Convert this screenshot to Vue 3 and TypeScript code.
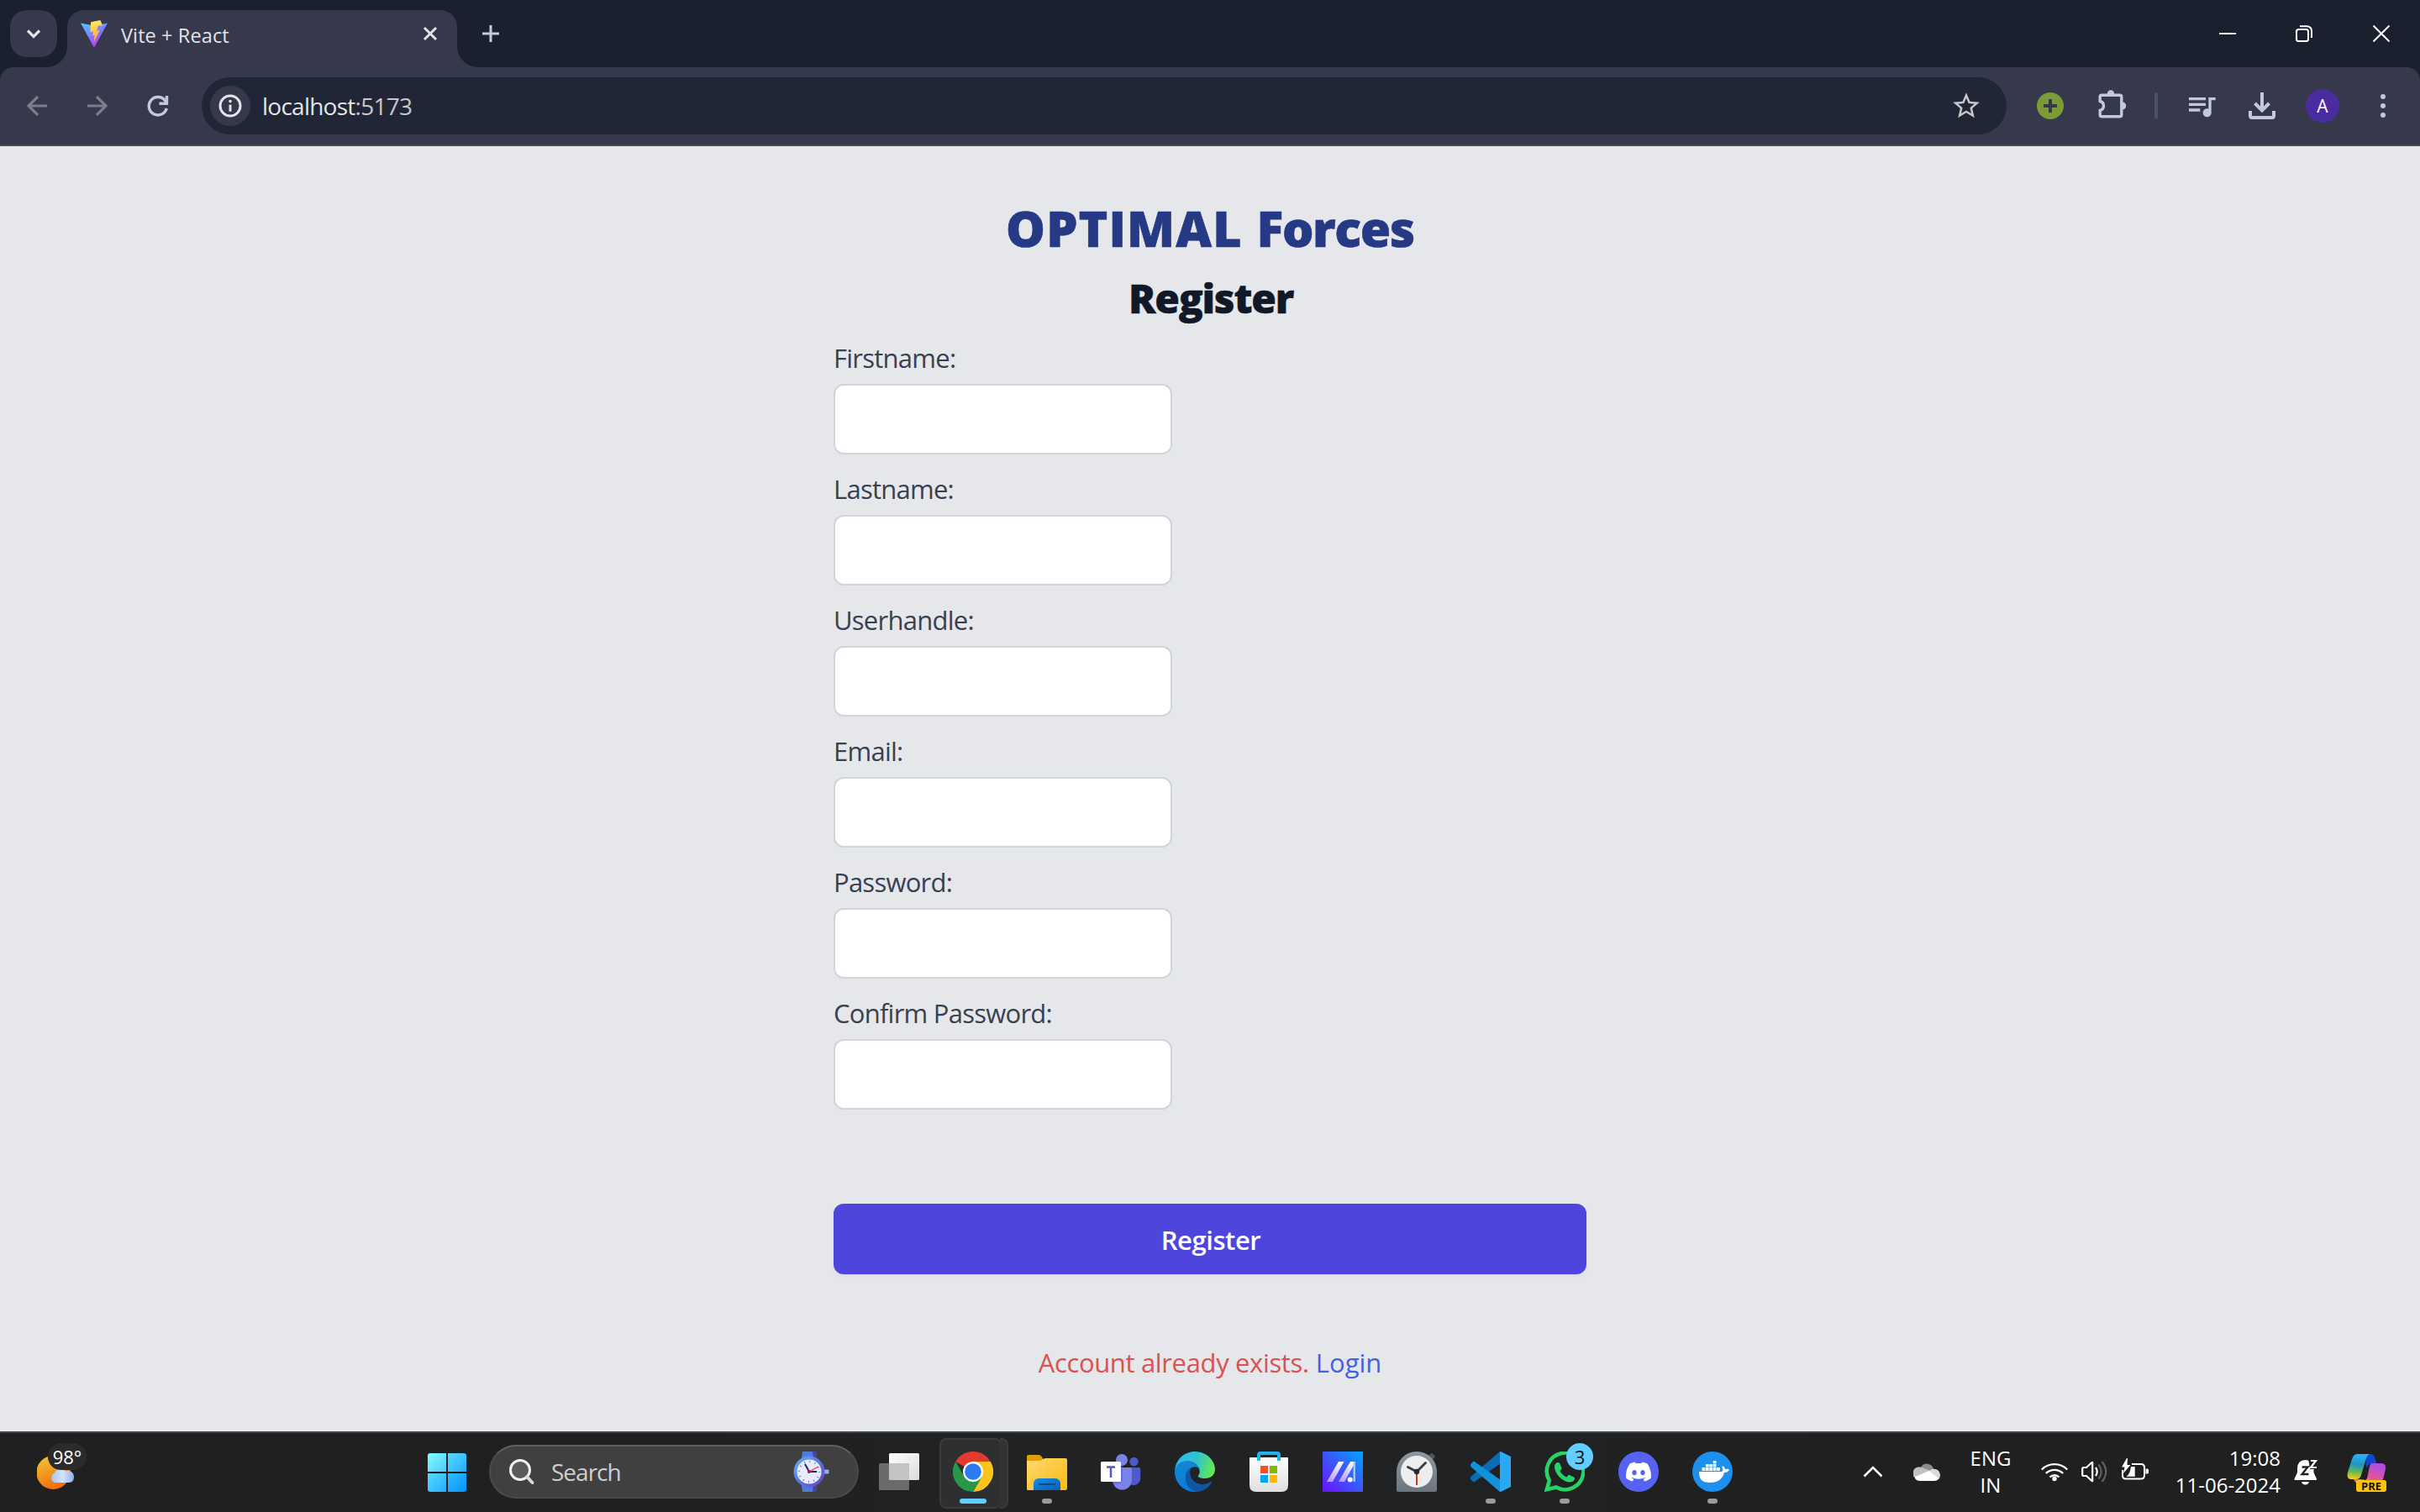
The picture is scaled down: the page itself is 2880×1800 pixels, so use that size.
<script setup lang="ts">
const fields: string[] = ['Firstname:', 'Lastname:', 'Userhandle:', 'Email:', 'Password:', 'Confirm Password:']
</script>

<template>
  <div class="screen">
    <header class="tabstrip">
      <button class="tab-search" aria-label="Search tabs">
        <svg width="24" height="24" viewBox="0 0 24 24"><path d="M5 8.5l7 7 7-7" fill="none" stroke="#e3e3e8" stroke-width="3.2" /></svg>
      </button>
      <div class="tab">
        <svg class="favicon" width="32" height="32" viewBox="0 0 32 32">
          <defs>
            <linearGradient id="vite-a" x1="0" y1="0" x2=".6" y2="1"><stop offset="0" stop-color="#41d1ff" /><stop offset="1" stop-color="#bd34fe" /></linearGradient>
            <linearGradient id="vite-b" x1=".4" y1="0" x2=".6" y2="1"><stop offset="0" stop-color="#ffea60" /><stop offset="1" stop-color="#ffa020" /></linearGradient>
          </defs>
          <path d="M0 3.6l16 2.8L32 3.6 16.7 31.4q-.7 1-1.4 0z" fill="url(#vite-a)" />
          <path d="M23.4 0L12.2 2.3l-.8 11.9 3.6-.7-.9 5.1 2.5-.7-1.2 9.4 7.2-15.4-3.7.8 2-6.1h5.3z" fill="url(#vite-b)" />
        </svg>
        <span class="tab-title">Vite + React</span>
        <svg width="20" height="20" viewBox="0 0 20 20"><path d="M3 3l14 14M17 3L3 17" stroke="#e3e3e8" stroke-width="3" /></svg>
      </div>
      <svg class="new-tab" width="20" height="20" viewBox="0 0 20 20"><path d="M10 0v20M0 10h20" stroke="#c3c8dc" stroke-width="3" /></svg>
      <div class="window-controls">
        <span><svg width="20" height="20" viewBox="0 0 20 20"><path d="M0 10h20" stroke="#fff" stroke-width="2" /></svg></span>
        <span><svg width="20" height="20" viewBox="0 0 20 20" fill="none" stroke="#fff" stroke-width="2"><rect x="1" y="5" width="14" height="14" rx="2.5" /><path d="M5 1.2h8.5a5.5 5.5 0 0 1 5.5 5.5V15" /></svg></span>
        <span><svg width="20" height="20" viewBox="0 0 20 20"><path d="M.5.5l19 19M19.5.5l-19 19" stroke="#fff" stroke-width="2" /></svg></span>
      </div>
    </header>

    <div class="toolbar-back">
      <nav class="toolbar">
        <span class="slot"><svg width="24" height="24" viewBox="0 0 24 24" fill="none" stroke="#7c7f8b" stroke-width="3.2"><path d="M24 12H2.500M13 1L2 12l11 11" /></svg></span>
        <span class="slot"><svg width="24" height="24" viewBox="0 0 24 24" fill="none" stroke="#7c7f8b" stroke-width="3.2"><path d="M0 12h21.500M11 1l11 11-11 11" /></svg></span>
        <span class="slot"><svg width="28" height="28" viewBox="0 0 28 28" fill="none" stroke="#c3c8dc" stroke-width="3.4"><path d="M24.300 17A10.700 10.700 0 1 1 22.500 7.800L24 10" /><path d="M24.500 2v9.300H15.500" /></svg></span>
        <div class="omnibox">
          <span class="site-info"><svg width="28" height="28" viewBox="0 0 28 28"><circle cx="14" cy="14" r="12" fill="none" stroke="#e3e3e8" stroke-width="3" /><path d="M14 12.700v8" stroke="#e3e3e8" stroke-width="3" /><circle cx="14" cy="8.600" r="1.800" fill="#e3e3e8" /></svg></span>
          <span class="url">localhost<span class="port">:5173</span></span>
          <svg class="star" width="38" height="38" viewBox="0 0 24 24"><path fill="#c7c7cc" d="M22 9.240l-7.190-.62L12 2 9.190 8.630 2 9.240l5.460 4.730L5.820 21 12 17.270 18.180 21l-1.630-7.030L22 9.240zM12 15.400l-3.760 2.270 1-4.280-3.320-2.880 4.380-.38L12 6.100l1.710 4.040 4.380.38-3.320 2.880 1 4.280L12 15.400z" /></svg>
        </div>
        <span class="slot first"><svg width="32" height="32" viewBox="0 0 32 32"><circle cx="16" cy="16" r="16" fill="#7c9a38" /><path d="M16 8v16M8 16h16" stroke="#35394b" stroke-width="4" /></svg></span>
        <span class="slot"><svg width="48" height="48" viewBox="0 0 48 48"><path d="M13.200 11.200H34.800a2 2 0 0 1 2 2V34.800a2 2 0 0 1-2 2H13.200a2 2 0 0 1-2-2V29.500Q15.500 28.200 15.500 24T11.200 18.500V13.200a2 2 0 0 1 2-2z" fill="none" stroke="#c3c8dc" stroke-width="3.4" /><path d="M19.800 10a4.200 4.800 0 0 1 8.400 0zM38 19.500a4.200 4.500 0 0 1 0 9z" fill="#c3c8dc" /></svg></span>
        <span class="divider"><i></i></span>
        <span class="slot"><svg width="40" height="40" viewBox="0 0 24 24"><path fill="#c3c8dc" d="M15 6H3v2h12V6zm0 4H3v2h12v-2zM3 16h8v-2H3v2zM17 6v8.180c-.31-.11-.65-.18-1-.18-1.660 0-3 1.340-3 3s1.340 3 3 3 3-1.340 3-3V8h3V6h-5z" /></svg></span>
        <span class="slot"><svg width="32" height="32" viewBox="0 0 32 32" fill="none" stroke="#c3c8dc" stroke-width="4"><path d="M16 0v21M7.500 13l8.500 8.500L24.500 13" /><path d="M2 22v6a2 2 0 0 0 2 2h24a2 2 0 0 0 2-2v-6" /></svg></span>
        <span class="slot"><span class="avatar">A</span></span>
        <span class="slot"><svg width="8" height="28" viewBox="0 0 8 28" fill="#c3c8dc"><circle cx="4" cy="3" r="3" /><circle cx="4" cy="14" r="3" /><circle cx="4" cy="25" r="3" /></svg></span>
      </nav>
    </div>

    <main class="page">
      <form class="register" @submit.prevent>
        <h1><span class="optimal">OPTIMAL</span> <span class="forces">Forces</span></h1>
        <h2>Register</h2>
        <div v-for="field in fields" :key="field" class="field">
          <label>{{ field }}</label>
          <input type="text" />
        </div>
        <button class="submit" type="submit">Register</button>
        <p class="notice"><span class="message">Account already exists.</span> <a>Login</a></p>
      </form>
    </main>

    <footer class="taskbar">
      <div class="weather">
        <svg width="46" height="40" viewBox="0 0 46 40">
          <defs>
            <linearGradient id="moon" x1=".2" y1="0" x2=".6" y2="1"><stop offset="0" stop-color="#f2c233" /><stop offset="1" stop-color="#f26a0c" /></linearGradient>
            <linearGradient id="mist" x1="0" y1="0" x2="1" y2="0"><stop offset="0" stop-color="#a9c4f2" /><stop offset=".5" stop-color="#d7e3f8" /><stop offset="1" stop-color="#8fb0ec" /></linearGradient>
          </defs>
          <path d="M13 1A20 20 0 1 0 36 31C38 27 40 22 39.500 17L30 17Q15 17 13 1z" fill="url(#moon)" />
          <path d="M22 32a6 6 0 0 1-1-11.500Q22 16 28 16q5 0 6 2.500 3-1.500 6 0 4 2 4 7 0 6.500-6 6.500z" fill="url(#mist)" />
        </svg>
        <span class="temp">98°</span>
      </div>
      <div class="start"><i class="a"></i><i class="b"></i><i class="b"></i><i class="c"></i></div>
      <div class="search">
        <svg width="32" height="32" viewBox="0 0 32 32" fill="none"><circle cx="14" cy="14" r="11.500" fill="#5a5a5a" stroke="#f2f2f2" stroke-width="3" /><path d="M22 22l6.500 7" stroke="#d5dbe2" stroke-width="4" stroke-linecap="round" /></svg>
        <span class="search-text">Search</span>
        <svg class="watch" width="44" height="50" viewBox="0 0 44 50">
          <defs><linearGradient id="watch" x1="0" y1="0" x2="1" y2="1"><stop offset="0" stop-color="#5fb4f0" /><stop offset=".5" stop-color="#5a79dd" /><stop offset="1" stop-color="#6a3fb8" /></linearGradient></defs>
          <path d="M11 1h16l1 8H10zM10 41h18l-1 8H11z" fill="#5078dd" /><path d="M23 1h4l1 8h-4zM24 41h4l-1 8h-4z" fill="#4a41a8" />
          <rect x="36" y="22.500" width="6.500" height="5" rx="1" fill="#8fb0ec" />
          <circle cx="19" cy="25" r="18.500" fill="url(#watch)" /><circle cx="19" cy="25" r="14.500" fill="#e7ecfc" />
          <circle cx="19" cy="25" r="12" fill="none" stroke="#7c78c8" stroke-width="2.500" stroke-dasharray="1 5.283" />
          <path d="M19 25l-5-9M19 25h9" stroke="#2b1e6e" stroke-width="2" /><path d="M17 26l13-7" stroke="#f0605c" stroke-width="1.500" /><circle cx="19" cy="25" r="2" fill="#a02050" />
        </svg>
      </div>

      <div class="apps">
        <span class="app">
          <svg width="48" height="48" viewBox="0 0 48 48"><defs><linearGradient id="tv" x1="0" y1="0" x2="1" y2="1"><stop offset="0" stop-color="#fff" /><stop offset="1" stop-color="#dcdcdc" /></linearGradient></defs><rect x="12" y="2" width="36" height="32" rx="1.500" fill="url(#tv)" /><rect x="0" y="14" width="36" height="32" rx="1.500" fill="#6b6b6b" /><path d="M12 14h22.500a1.500 1.500 0 0 1 1.500 1.500V34H13.500a1.500 1.500 0 0 1-1.500-1.500z" fill="#c3c3c3" /></svg>
        </span>
        <span class="app active">
          <svg width="48" height="48" viewBox="0 0 48 48">
            <path d="M24 24L3.200 12A24 24 0 0 1 44.800 12z" fill="#e33b2e" />
            <path d="M24 12H44.800A24 24 0 0 1 24 48L34.400 30z" fill="#fcc31e" />
            <path d="M3.200 12L13.600 30 24 36 34.400 30 24 48A24 24 0 0 1 3.200 12z" fill="#279847" />
            <circle cx="24" cy="24" r="12" fill="#fff" /><circle cx="24" cy="24" r="9.800" fill="#2b7bf0" />
          </svg>
          <i class="mark wide"></i>
        </span>
        <span class="app">
          <svg width="48" height="48" viewBox="0 0 48 48">
            <defs><linearGradient id="fold" x1="0" y1="0" x2="1" y2="1"><stop offset="0" stop-color="#ffd970" /><stop offset="1" stop-color="#f9b90f" /></linearGradient><linearGradient id="foldb" x1="0" y1="0" x2="1" y2="1"><stop offset="0" stop-color="#1490e0" /><stop offset="1" stop-color="#0a5eb5" /></linearGradient></defs>
            <path d="M0 6q0-2 2-2h12q3 0 4.500 3.500L21 12H0z" fill="#dfa005" /><path d="M0 11h15q2 0 3.500-1.500T22 8h24q2 0 2 2v34q0 2-2 2H1.500Q0 46 0 44.500z" fill="url(#fold)" />
            <path d="M8 46v-8a6 6 0 0 1 6-6h20a6 6 0 0 1 6 6v8z" fill="url(#foldb)" /><path d="M15 39h18" stroke="#0b4a8c" stroke-width="2" stroke-linecap="round" />
          </svg>
          <i class="mark"></i>
        </span>
        <span class="app">
          <svg width="48" height="48" viewBox="0 0 48 48">
            <circle cx="39.500" cy="12" r="5.200" fill="#5059c9" /><path d="M33 19h12.500q1.700 0 1.700 2v10a8.500 8.500 0 0 1-14 7z" fill="#5059c9" />
            <circle cx="25" cy="10" r="7" fill="#7b83eb" /><path d="M14 19h21q2 0 2 2v13a11.500 11.500 0 0 1-23 0z" fill="#7b83eb" />
            <path d="M24 17v19H14.500l.5 3Q26 38 26 34V17z" fill="#5059c9" opacity=".5" />
            <rect y="12" width="24" height="24" rx="1.500" fill="#fff" /><path d="M7 18.500h10M12 18.500V31" stroke="#5059c9" stroke-width="2.500" />
          </svg>
        </span>
        <span class="app">
          <svg width="48" height="48" viewBox="0 0 48 48">
            <defs>
              <linearGradient id="edge-a" x1="0" y1=".3" x2="1" y2=".5"><stop offset="0" stop-color="#2fb7f0" /><stop offset=".5" stop-color="#2cc3d4" /><stop offset="1" stop-color="#66e84e" /></linearGradient>
              <linearGradient id="edge-b" x1="0" y1="0" x2=".4" y2="1"><stop offset="0" stop-color="#1488cf" /><stop offset="1" stop-color="#0a7be0" /></linearGradient>
            </defs>
            <path d="M0 23C1 9 12 0 24 0c14 0 24 11 24 21 0 7-5 11-12 11-5 0-9-1.500-8-3.500 4-4 1-11-5-13C14 11 3 13 0 23z" fill="url(#edge-a)" />
            <path d="M0 24C1 14 9 11 15 11c8 0 14 5 15 11-2-4-7-5-11-2C9 26 13 42 26 48 12 49 0 38 0 24z" fill="url(#edge-b)" />
            <path d="M19 20c-3 10 4 19 14 19 4 0 8-2 10.500-3.300.6-.2 1 .2.700.8C40 44 33 48 26 48 17 46 12 38 13 30c.5-5 3-8.500 6-10z" fill="#0f57a4" />
          </svg>
        </span>
        <span class="app">
          <svg width="48" height="48" viewBox="0 0 48 48">
            <defs><linearGradient id="bag" x1="0" y1="0" x2="0" y2="1"><stop offset="0" stop-color="#fff" /><stop offset="1" stop-color="#dedede" /></linearGradient></defs>
            <path d="M1 8q0-1 1-1h44q1 0 1 1v32q0 8-8 8H9q-8 0-8-8z" fill="url(#bag)" />
            <path d="M12 11V4q0-2 2-2h20q2 0 2 2v7" fill="none" stroke="#1fb4ee" stroke-width="4" />
            <path fill="#f3512a" d="M14 17h9v9h-9z" /><path fill="#7fba00" d="M25 17h9v9h-9z" /><path fill="#00a4ef" d="M14 28h9v9h-9z" /><path fill="#ffb900" d="M25 28h9v9h-9z" />
          </svg>
        </span>
        <span class="app">
          <svg width="48" height="48" viewBox="0 0 48 48">
            <defs><linearGradient id="asus" x1="0" y1="1" x2="1" y2="0"><stop offset="0" stop-color="#6a12fb" /><stop offset=".5" stop-color="#3d55fc" /><stop offset="1" stop-color="#02a5fd" /></linearGradient><linearGradient id="asus-m" x1="0" y1="0" x2="0" y2="1"><stop offset="0" stop-color="#fff" /><stop offset="1" stop-color="#b59bf8" /></linearGradient></defs>
            <path d="M0 0h48v48H0z" fill="url(#asus)" /><path d="M19 12h6.500L12 36H5z" fill="url(#asus-m)" /><path d="M33 12h6.500L26 36h-7z" fill="url(#asus-m)" /><path d="M36.500 12H39v24h-2.500z" fill="#9ac6fb" /><circle cx="32.700" cy="33.500" r="3" fill="#fff" />
          </svg>
        </span>
        <span class="app">
          <svg width="48" height="48" viewBox="0 0 48 48">
            <defs><linearGradient id="clk" x1="0" y1="0" x2="0" y2="1"><stop offset="0" stop-color="#8f98a1" /><stop offset="1" stop-color="#6b7680" /></linearGradient></defs>
            <path d="M38 6l4-3 3 3-4 4z" fill="#50555a" stroke="#50555a" stroke-width="2" stroke-linejoin="round" /><path d="M0 24a24 24 0 0 1 48 0v22q0 2-2 2H2q-2 0-2-2z" fill="url(#clk)" /><circle cx="24" cy="24" r="19" fill="#eceeef" />
            <path d="M24 24l-10.500-5.500M24 24l10.500-10.500" stroke="#3a4045" stroke-width="3" stroke-linecap="round" /><path d="M24 26v14" stroke="#d83b01" stroke-width="2" /><circle cx="24" cy="24" r="3.200" fill="#25292c" />
          </svg>
        </span>
        <span class="app">
          <svg width="48" height="48" viewBox="0 0 48 48">
            <path d="M1 34l3 2.500L36 14V0h-1L1 29.500Q-1 31.500 1 34z" fill="#0a6db5" /><path d="M4 11.500L36 34v14h-1L1 18.500Q-1 16.500 1 14z" fill="#1292da" /><path d="M35 0q1 0 1.500.2L48 6v36l-11.500 5.800q-.5.200-1.500.2z" fill="#28a9f2" />
          </svg>
          <i class="mark"></i>
        </span>
        <span class="app">
          <svg width="48" height="48" viewBox="0 0 48 48">
            <path d="M2.800 45.200l3-10.700A21.800 21.800 0 1 1 14 42.500z" fill="none" stroke="#25d366" stroke-width="4.500" />
            <path d="M12 18c0-3 2-5 4-5 1.500 0 2 .5 2.500 2l2 4.500c.3 1-.2 1.800-2 3.700C20 26.500 23 29 26.500 30.500c2-2.500 2.500-3 3.500-2.500l5 2.500c1 .5 1.200 1 1 2-.5 2.500-3 4-6 4C21 36 12 26 12 18z" fill="#25d366" />
          </svg>
          <b class="badge">3</b><i class="mark"></i>
        </span>
        <span class="app">
          <svg width="48" height="48" viewBox="0 0 48 48"><circle cx="24" cy="24" r="24" fill="#5562f2" />
            <g transform="translate(9 9) scale(1.250)"><path fill="#fff" d="M20.317 4.370a19.791 19.791 0 00-4.885-1.515.074.074 0 00-.079.037c-.211.375-.445.865-.608 1.250-1.845-.276-3.680-.276-5.487 0-.164-.393-.406-.874-.618-1.250a.077.077 0 00-.079-.037 19.736 19.736 0 00-4.885 1.515.07.07 0 00-.032.028C.533 9.046-.319 13.580.099 18.058a.082.082 0 00.031.056c2.053 1.508 4.041 2.423 5.993 3.029a.078.078 0 00.084-.028c.462-.63.873-1.295 1.226-1.994a.076.076 0 00-.042-.106c-.653-.248-1.274-.550-1.872-.892a.077.077 0 01-.008-.128c.126-.094.252-.192.372-.291a.074.074 0 01.078-.011c3.928 1.793 8.180 1.793 12.061 0a.074.074 0 01.079.010c.120.099.246.198.373.292a.077.077 0 01-.007.128 12.299 12.299 0 01-1.873.891.077.077 0 00-.041.107c.360.698.772 1.363 1.225 1.993a.076.076 0 00.084.029c1.961-.607 3.950-1.522 6.002-3.029a.077.077 0 00.031-.055c.500-5.177-.838-9.674-3.549-13.660a.061.061 0 00-.031-.029zM8.020 15.331c-1.183 0-2.157-1.086-2.157-2.419 0-1.333.956-2.419 2.157-2.419 1.211 0 2.176 1.095 2.157 2.419 0 1.333-.956 2.419-2.157 2.419zm7.975 0c-1.183 0-2.157-1.086-2.157-2.419 0-1.333.955-2.419 2.157-2.419 1.211 0 2.176 1.095 2.157 2.419 0 1.333-.946 2.419-2.157 2.419z" /></g>
          </svg>
        </span>
        <span class="app">
          <svg width="48" height="48" viewBox="0 0 48 48"><circle cx="24" cy="24" r="24" fill="#1d8fec" />
            <path fill="#fff" d="M8 24h26.500q2-.5 2-2.500-2-2.500-.5-4.500 3 1.500 3 4 3-.5 5 .5-1.500 3.500-6 3.500-3 12-17 12C9 37 8 30 8 24z" />
            <path fill="#fff" d="M11.500 19h3.800v4h-3.800zM15.900 19h3.800v4h-3.800zM20.300 19h3.800v4h-3.800zM24.700 19h3.800v4h-3.800zM29.100 19h3.800v4h-3.800zM15.900 15h3.800v3.500h-3.800zM20.300 15h3.800v3.500h-3.800zM24.700 15h3.800v3.500h-3.800zM24.700 11h3.800v3.500h-3.800z" />
          </svg>
          <i class="mark"></i>
        </span>
      </div>

      <div class="tray">
        <span class="t48"><svg width="24" height="14" viewBox="0 0 24 14"><path d="M1.500 12.500L12 2l10.500 10.500" fill="none" stroke="#fff" stroke-width="2.500" /></svg></span>
        <span class="t80"><svg width="32" height="22" viewBox="0 0 32 22"><path d="M9 6a8 8 0 0 1 15 2l-6 5z" fill="#8c8c8c" /><path d="M7.500 5.500a7 7 0 0 1 5 1.500L21 10 3 19A7.300 7.300 0 0 1 7.500 5.500z" fill="#c1c1c1" /><path d="M20 9.500a7 7 0 0 1 11.500 3.500Q33 17 30 20L17 12z" fill="#dadada" /><path d="M2 17l17-7 11.500 9.500Q28 22 25 22H8q-4 0-6-3z" fill="#fff" /></svg></span>
        <span class="lang">ENG<br />IN</span>
        <span class="t48"><svg width="32" height="24" viewBox="0 0 32 24" fill="none" stroke="#fff" stroke-width="2.300"><path d="M.8 9.500a21.500 21.500 0 0 1 30.400 0M5.800 14a14.500 14.500 0 0 1 20.400 0M10.500 18.500a7.800 7.800 0 0 1 11 0" /><circle cx="16" cy="20.500" r="2.700" fill="#fff" stroke="none" /></svg></span>
        <span class="t48"><svg width="32" height="28" viewBox="0 0 32 28" fill="none" stroke="#fff" stroke-width="2.200"><path d="M1.200 10.500q0-1.500 1.500-1.500H6l6.500-6q.7-.6.700.5v21q0 1.100-.7.500L6 19H2.700q-1.500 0-1.500-1.500z" /><path d="M17 9q3.500 5 0 10" /><g stroke="#5f5f5f"><path d="M20.500 5.500q6.500 8.500 0 17M24.500 2q9.500 12 0 24" /></g></svg></span>
        <span class="t48"><svg width="32" height="32" viewBox="0 0 32 32"><path d="M12 7H23q4 0 4 4v9q0 4.500-4 4.500H5q-4 0-4-4V14" fill="none" stroke="#fff" stroke-width="2" /><path d="M28.500 12.500h2q1.500 0 1.500 1.500v3q0 1.500-1.500 1.500h-2z" fill="#fff" /><path d="M11 10h4.700v11.700H5.500Q10 19 11 10z" fill="#fff" /><path d="M6 0L0 10.500h3.500L2 18l8.500-10H6.500L7 0z" fill="#fff" /></svg></span>
        <span class="clock">19:08<br />11-06-2024</span>
        <span class="bell"><svg width="30" height="32" viewBox="0 0 30 32"><path d="M13.500 2Q23 2 23.500 12v5l3.500 7.500q.5 1.500-1 1.500H1.500Q0 26 .5 24.500L4 17v-5Q4.500 2 13.500 2z" fill="#fff" /><path d="M9 28h9q-1 3.500-4.500 3.500T9 28z" fill="#fff" /><path d="M17 0h10v13H19z" fill="#202020" /><path d="M9.500 10.500h7l-7 8.500h8" fill="none" stroke="#202020" stroke-width="2.300" /><path d="M20 3h6l-6 8h7" fill="none" stroke="#fff" stroke-width="2.200" /></svg></span>
        <span class="copilot">
          <svg width="48" height="48" viewBox="0 0 48 48">
            <defs><linearGradient id="cp-a" x1=".5" y1="0" x2=".4" y2="1"><stop offset="0" stop-color="#2db4f5" /><stop offset=".4" stop-color="#1e94c8" /><stop offset=".7" stop-color="#5fb957" /><stop offset="1" stop-color="#f5cc1b" /></linearGradient><linearGradient id="cp-b" x1=".8" y1="0" x2=".2" y2="1"><stop offset="0" stop-color="#a64cf0" /><stop offset=".6" stop-color="#e0569d" /><stop offset="1" stop-color="#fb7750" /></linearGradient></defs>
            <path d="M22 3h6q4 0 5.500 5l2 6.500h-6q-4 0-6 5z" fill="#1147d0" />
            <path d="M12 3h16q-3.500 0-5 5L17 28q-1.500 5-6 5H5q-6 0-4-8L6 9q2-6 6-6z" fill="url(#cp-a)" />
            <path d="M30 14h11q6 0 5 7l-3 12q-2 5-6 5H14q-4 0-6-5h8q4 0 5.500 1 2 0 3-4l2-10q1-6 3.500-6z" fill="url(#cp-b)" />
          </svg>
          <b class="pre">PRE</b>
        </span>
      </div>
    </footer>
  </div>
</template>

<style>
body { margin: 0; background: #202020; overflow: hidden; }
</style>

<style scoped>
* { box-sizing: border-box; }
.screen { width: 2880px; height: 1800px; display: flex; flex-direction: column; font-family: "Open Sans", "Noto Sans", sans-serif; white-space: nowrap; overflow: hidden; }
svg { display: block; flex: none; }
button { border: 0; padding: 0; font-family: inherit; }

.tabstrip { height: 80px; flex: none; display: flex; align-items: flex-start; padding: 12px 0 0 12px; background: #1b202f; }
.tab-search { width: 56px; height: 56px; border-radius: 20px; background: #35394b; display: flex; align-items: center; justify-content: center; margin-right: 12px; }
.tab { position: relative; width: 464px; height: 68px; padding: 0 22px 12px 16px; display: flex; align-items: center; background: #35394b; border-radius: 20px 20px 0 0; }
.tab::before, .tab::after { content: ""; position: absolute; bottom: 0; width: 24px; height: 24px; }
.tab::before { left: -24px; background: radial-gradient(circle at 0 0, transparent 23.5px, #35394b 24px); }
.tab::after { right: -24px; background: radial-gradient(circle at 100% 0, transparent 23.5px, #35394b 24px); }
.tab-title { flex: 1; margin-left: 16px; padding-top: 3px; font-size: 23.5px; letter-spacing: 0.1px; color: #e3e3e8; }
.new-tab { margin: 18px 0 0 30px; }
.window-controls { margin: -12px 0 0 auto; display: flex; height: 80px; }
.window-controls span { width: 92px; display: flex; align-items: center; justify-content: center; }
.window-controls span:first-child { padding-left: 2px; }

.toolbar-back { flex: none; background: #1b202f; }
.toolbar { height: 94px; padding: 0 8px; display: flex; align-items: center; background: #35394b; border-radius: 16px 16px 0 0; border-bottom: 2px solid #47484d; }
.slot { width: 72px; flex: none; display: flex; justify-content: center; }
.omnibox { flex: 1; height: 68px; margin-left: 16px; border-radius: 34px; background: #202636; display: flex; align-items: center; padding: 0 29px 0 10px; }
.site-info { width: 48px; height: 48px; border-radius: 50%; background: #35394b; display: flex; align-items: center; justify-content: center; }
.url { margin-left: 14px; font-size: 28px; letter-spacing: -0.75px; color: #e3e3e8; }
.port { color: #c7c7cc; }
.star { margin-left: auto; }
.first { margin-left: 16px; }
.divider { width: 36px; display: flex; justify-content: center; }
.divider i { width: 4px; height: 32px; border-radius: 2px; background: #4c5166; }
.avatar { width: 40px; height: 40px; border-radius: 50%; background: #4b2ca0; color: #fff; font-size: 21px; display: flex; align-items: center; justify-content: center; }

.page { height: 1530px; flex: none; background: #e5e7eb; padding-top: 61px; }
.register { width: 896px; margin: 0 auto; }
h1, h2, p { margin: 0; text-align: center; }
h1 { font-size: 59px; line-height: 72px; font-weight: 800; color: #253985; word-spacing: 1.5px; -webkit-text-stroke: 0.6px #253985; }
.optimal { letter-spacing: 1.1px; }
.forces { letter-spacing: -1.4px; }
h2 { font-size: 48px; line-height: 64px; font-weight: 800; letter-spacing: -1.25px; color: #111827; margin-top: 16px; padding-left: 2px; -webkit-text-stroke: 0.5px #111827; }
.field { margin-top: 17px; }
h2 + .field { margin-top: 15px; }
.field label { display: block; font-size: 31px; line-height: 48px; letter-spacing: -0.75px; color: #374151; }
.field input { display: block; width: 403px; height: 84px; margin-top: 7px; border: 2px solid #d1d5db; border-radius: 12px; background: #fff; }
.submit { width: 896px; height: 84px; margin-top: 112px; padding: 2px 0 0 2px; border-radius: 12px; background: #4e46dc; color: #fff; font-size: 31px; font-weight: 600; letter-spacing: -0.45px; box-shadow: 0 2px 4px rgba(0, 0, 0, 0.05); display: block; }
.notice { margin-top: 81px; font-size: 31px; line-height: 48px; color: #dc524e; }
.message { letter-spacing: -0.35px; }
.notice a { color: #4262e4; }

.taskbar { height: 96px; flex: none; border-top: 2px solid #424545; display: flex; align-items: center; padding: 0 0 2px 44px; background: linear-gradient(90deg, #202020 30%, #202224 42%, #202224 58%, #202020 75%); color: #fff; }
.weather { position: relative; width: 64px; height: 38px; }
.temp { position: absolute; left: 13px; top: -15px; width: 46px; height: 32px; border-radius: 16px; background: #2b2b2b; font-size: 22px; line-height: 32px; text-align: center; }
.start { width: 46px; height: 46px; margin: 2px 0 0 401px; display: grid; grid-template-columns: 22px 22px; grid-template-rows: 22px 22px; gap: 2px; border-radius: 3px; overflow: hidden; }
.start .a { background: linear-gradient(135deg, #84fbff, #4dcbfe); }
.start .b { background: linear-gradient(135deg, #58d8ff, #23aeff); }
.start .c { background: linear-gradient(135deg, #32bcff, #0494ff); }
.search { width: 440px; height: 64px; margin: 0 4px 0 27px; border-radius: 32px; background: #404040; border: 2px solid #4a4a4a; border-top-color: #606060; display: flex; align-items: center; padding: 0 32px 0 21px; }
.search-text { margin-left: 19px; font-size: 28px; letter-spacing: -1px; color: #cfcfcf; }
.watch { margin-left: auto; }
.apps { display: flex; height: 92px; }
.app { position: relative; width: 88px; display: flex; align-items: center; justify-content: center; }
.app.active::before { content: ""; position: absolute; left: 4px; top: 6px; width: 70px; height: 80px; border-radius: 8px; border: 2px solid #393b3d; background: #2d2f31; }
.app.active::after { content: ""; position: absolute; left: 76px; top: 6px; width: 8px; height: 80px; border-radius: 0 8px 8px 0; border: 2px solid #393b3d; border-left: 0; background: #303234; }
.app svg { position: relative; }
.mark { position: absolute; bottom: 8px; left: 38px; width: 12px; height: 6px; border-radius: 3px; background: #9b9b9b; }
.mark.wide { left: 28px; width: 32px; background: #62cdff; }
.badge { position: absolute; left: 46px; top: 12px; width: 32px; height: 32px; border-radius: 50%; background: #62cdff; color: #111; font-size: 22px; line-height: 32px; font-weight: 400; text-align: center; }
.tray { margin-left: auto; padding-right: 39px; display: flex; align-items: center; height: 92px; font-size: 24px; line-height: 32px; }
.t48, .t80 { width: 48px; display: flex; justify-content: center; }
.t80 { width: 80px; }
.lang { width: 72px; margin-right: 16px; text-align: center; }
.clock { width: 149px; text-align: right; }
.bell { width: 48px; margin-left: 7px; display: flex; justify-content: center; }
.copilot { position: relative; margin-left: 24px; width: 48px; }
.pre { position: absolute; left: 11px; bottom: 0; width: 36px; height: 14px; border-radius: 3px; background: #fdc20a; color: #111; font-size: 13px; line-height: 14px; text-align: center; }
</style>
